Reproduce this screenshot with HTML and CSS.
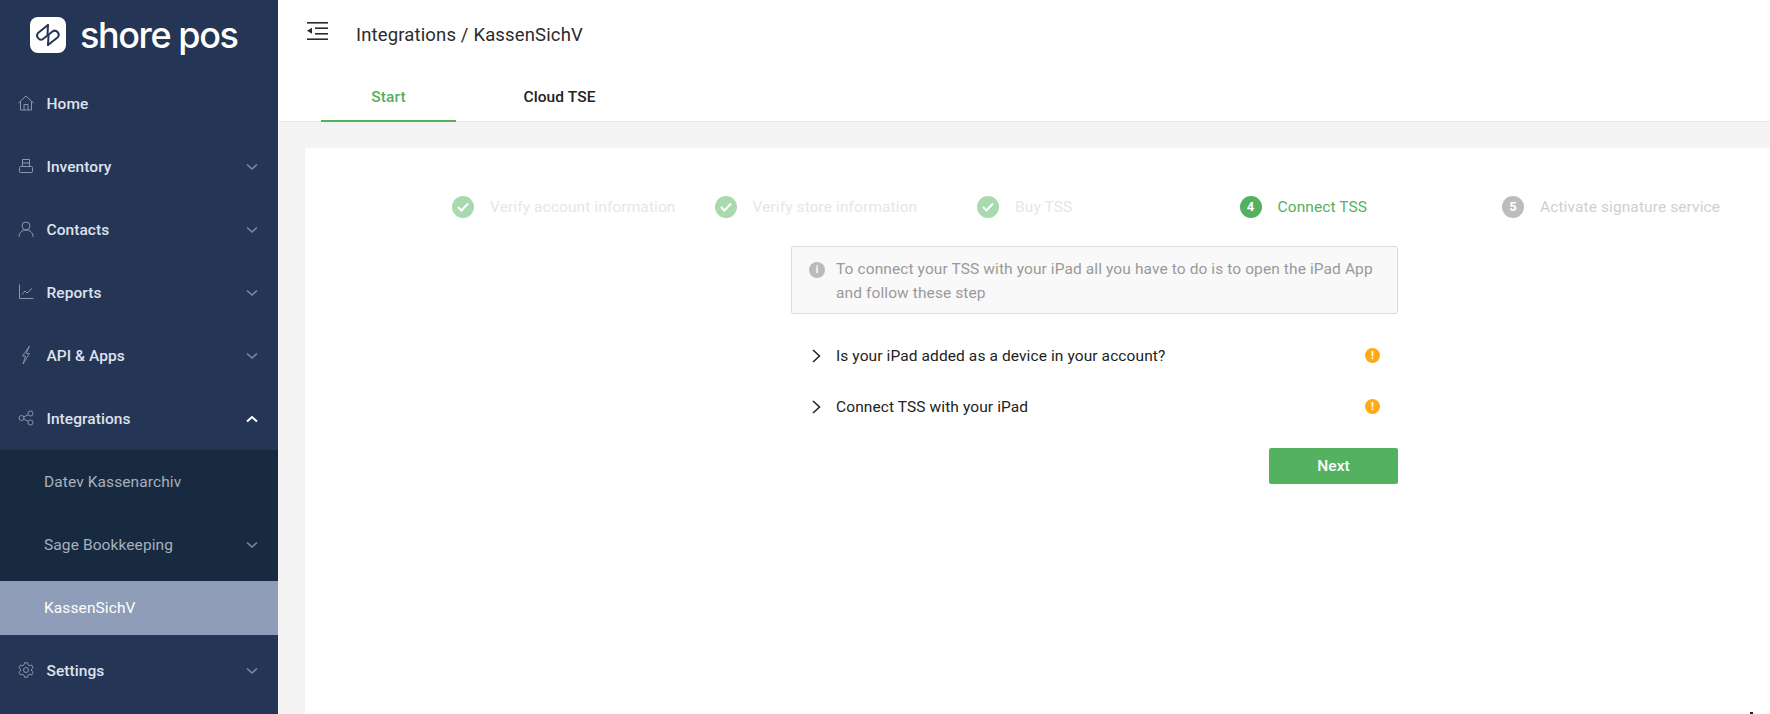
FILE: index.html
```html
<!DOCTYPE html>
<html lang="en">
<head>
    <meta charset="UTF-8">
    <title>Integrations / KassenSichV</title>
    <link rel="stylesheet" href="styles.css">
</head>
<body>
    <div class="app">
        <aside class="sidebar">
            <div class="logo">
                <span class="logo-mark">
                    <svg width="36" height="36" viewBox="0 0 36 36" fill="none" stroke="#253556" stroke-width="2" stroke-linejoin="round" stroke-linecap="round">
                        <path d="M18 8 8 16Q6 18.500 8 21 10.500 24 13 22L22.500 14.500Q25 12.500 27.500 15 30 18 27.500 20.500L18 28"/>
                        <path d="M18 8 17.500 17.500M18 28 18.500 18.500"/>
                    </svg>
                </span>
                <span class="logo-text">shore pos</span>
            </div>
            <nav>
                <a class="nav-item">
                    <svg class="nav-icon" viewBox="0 0 16 16" fill="none" stroke="currentColor"><path d="M.5 8 8 1 15.500 8M2.500 6.500v8.500h11V6.500M6 15V9.500h4V15"/></svg>
                    <span>Home</span>
                </a>
                <a class="nav-item">
                    <svg class="nav-icon" viewBox="0 0 16 16" fill="none" stroke="currentColor"><path d="M4.500 8V1.500h7V8M4 5h8"/><rect x="1.500" y="8.500" width="13" height="6" rx="1"/></svg>
                    <span>Inventory</span>
                    <svg class="nav-arrow" viewBox="0 0 12 8" fill="none" stroke="currentColor" stroke-width="1.600"><path d="M1 1.500 6 6l5-4.500"/></svg>
                </a>
                <a class="nav-item">
                    <svg class="nav-icon" viewBox="0 0 16 16" fill="none" stroke="currentColor"><circle cx="8" cy="5" r="4"/><path d="M1 16c0-4.500 3-7 7-7s7 2.500 7 7"/></svg>
                    <span>Contacts</span>
                    <svg class="nav-arrow" viewBox="0 0 12 8" fill="none" stroke="currentColor" stroke-width="1.600"><path d="M1 1.500 6 6l5-4.500"/></svg>
                </a>
                <a class="nav-item">
                    <svg class="nav-icon" viewBox="0 0 16 16" fill="none" stroke="currentColor"><path d="M1.500 .5v14h14M4 10.500 7 7l2 2 5-4.500"/></svg>
                    <span>Reports</span>
                    <svg class="nav-arrow" viewBox="0 0 12 8" fill="none" stroke="currentColor" stroke-width="1.600"><path d="M1 1.500 6 6l5-4.500"/></svg>
                </a>
                <a class="nav-item">
                    <svg class="nav-icon" viewBox="0 0 16 16" fill="none" stroke="currentColor" stroke-width=".9"><path d="M11.500-1 4.500 9h3L5 17 11.500 6.500H8.200z"/></svg>
                    <span>API &amp; Apps</span>
                    <svg class="nav-arrow" viewBox="0 0 12 8" fill="none" stroke="currentColor" stroke-width="1.600"><path d="M1 1.500 6 6l5-4.500"/></svg>
                </a>
                <a class="nav-item">
                    <svg class="nav-icon" viewBox="0 0 16 16" fill="none" stroke="currentColor"><circle cx="3.500" cy="8" r="2.500"/><circle cx="12.500" cy="3.500" r="2.500"/><circle cx="12.500" cy="12.500" r="2.500"/><path d="M5.800 7 10.200 4.600M5.800 9l4.400 2.400"/></svg>
                    <span>Integrations</span>
                    <svg class="nav-arrow open" viewBox="0 0 12 8" fill="none" stroke="currentColor" stroke-width="2"><path d="M1 6.500 6 2l5 4.500"/></svg>
                </a>
                <div class="submenu">
                    <a class="sub-item"><span>Datev Kassenarchiv</span></a>
                    <a class="sub-item">
                        <span>Sage Bookkeeping</span>
                        <svg class="nav-arrow" viewBox="0 0 12 8" fill="none" stroke="currentColor" stroke-width="1.600"><path d="M1 1.500 6 6l5-4.500"/></svg>
                    </a>
                    <a class="sub-item active"><span>KassenSichV</span></a>
                </div>
                <a class="nav-item">
                    <svg class="nav-icon" viewBox="0 0 16 16" fill="none" stroke="currentColor"><path d="M6.500.8h3l.5 2 1.600.9 2-.6 1.500 2.600-1.500 1.400v1.800l1.500 1.400-1.500 2.600-2-.6-1.600.9-.5 2h-3l-.5-2-1.600-.9-2 .6L.9 10.300l1.500-1.400V7.100L.9 5.700l1.500-2.600 2 .6 1.600-.9z"/><circle cx="8" cy="8" r="2.500"/></svg>
                    <span>Settings</span>
                    <svg class="nav-arrow" viewBox="0 0 12 8" fill="none" stroke="currentColor" stroke-width="1.600"><path d="M1 1.500 6 6l5-4.500"/></svg>
                </a>
            </nav>
        </aside>

        <main class="main">
            <header class="topbar">
                <div class="title-row">
                    <svg class="menu-toggle" viewBox="0 0 21 18" fill="#2b2b2b">
                        <rect y="0" width="21" height="1.600"/>
                        <rect x="8" y="5.400" width="13" height="1.600"/>
                        <rect x="8" y="11" width="13" height="1.600"/>
                        <rect y="16.400" width="21" height="1.600"/>
                        <path d="M0 8.800 5 5.800v6z"/>
                    </svg>
                    <div class="page-title">Integrations / KassenSichV</div>
                </div>
                <div class="tabs">
                    <div class="tab active">Start</div>
                    <div class="tab">Cloud TSE</div>
                </div>
            </header>

            <div class="content">
                <div class="card">
                    <div class="steps">
                        <div class="step done">
                            <span class="step-dot"><svg width="12" height="10" viewBox="0 0 12 10" fill="none" stroke="#fff" stroke-width="2"><path d="M1 5l3.500 3.500L11 1.500"/></svg></span>
                            <span>Verify account information</span>
                        </div>
                        <div class="step done">
                            <span class="step-dot"><svg width="12" height="10" viewBox="0 0 12 10" fill="none" stroke="#fff" stroke-width="2"><path d="M1 5l3.500 3.500L11 1.500"/></svg></span>
                            <span>Verify store information</span>
                        </div>
                        <div class="step done">
                            <span class="step-dot"><svg width="12" height="10" viewBox="0 0 12 10" fill="none" stroke="#fff" stroke-width="2"><path d="M1 5l3.500 3.500L11 1.500"/></svg></span>
                            <span>Buy TSS</span>
                        </div>
                        <div class="step current">
                            <span class="step-dot">4</span>
                            <span>Connect TSS</span>
                        </div>
                        <div class="step todo">
                            <span class="step-dot">5</span>
                            <span>Activate signature service</span>
                        </div>
                    </div>

                    <div class="panel">
                        <div class="info-box">
                            <span class="info-icon">i</span>
                            <p>To connect your TSS with your iPad all you have to do is to open the iPad App and follow these step</p>
                        </div>
                        <div class="check-row">
                            <svg class="row-arrow" viewBox="0 0 9 14" fill="none" stroke="#222" stroke-width="1.500"><path d="M1 1l6.500 6L1 13"/></svg>
                            <span class="row-label">Is your iPad added as a device in your account?</span>
                            <span class="warn-icon">!</span>
                        </div>
                        <div class="check-row">
                            <svg class="row-arrow" viewBox="0 0 9 14" fill="none" stroke="#222" stroke-width="1.500"><path d="M1 1l6.500 6L1 13"/></svg>
                            <span class="row-label">Connect TSS with your iPad</span>
                            <span class="warn-icon">!</span>
                        </div>
                        <div class="actions">
                            <button class="btn-next">Next</button>
                        </div>
                    </div>
                </div>
            </div>
        </main>
        <div class="corner-mark"></div>
    </div>
</body>
</html>
```
FILE: styles.css
```css
* {
    box-sizing: border-box;
}

html, body {
    height: 100%;
}

body {
    margin: 0;
    overflow: hidden;
    font-family: Roboto, "Liberation Sans", sans-serif;
    font-size: 15.500px;
    letter-spacing: 0.100px;
    color: #222;
    background-color: #f4f4f4;
}

.app {
    display: flex;
    height: 714px;
    position: relative;
}

.sidebar {
    width: 278px;
    flex-shrink: 0;
    background-color: #253556;
}

.logo {
    height: 72px;
    padding: 17px 0 0 30px;
    display: flex;
    align-items: flex-start;
}

.logo-mark {
    width: 36px;
    height: 36px;
    border-radius: 8px;
    background-color: #fff;
    display: block;
}

.logo-mark svg {
    display: block;
}

.logo-text {
    margin-left: 14px;
    font-family: Inter, "Open Sans", sans-serif;
    font-size: 36px;
    line-height: 36px;
    font-weight: 500;
    letter-spacing: -1.400px;
    color: #fff;
}

.nav-item {
    height: 63px;
    display: flex;
    align-items: center;
    padding: 0 19px 0 18px;
    font-weight: 500;
    letter-spacing: 0.050px;
    color: #dde2ec;
}

.nav-icon {
    width: 16px;
    height: 16px;
    margin: -2px 12.500px 0 0;
    color: #8d97a9;
    flex-shrink: 0;
    overflow: visible;
}

.nav-arrow {
    width: 12px;
    height: 8px;
    margin-left: auto;
    margin-right: 1px;
    color: #7d889d;
}

.nav-arrow.open {
    color: #fff;
}

.submenu {
    background-color: #172a40;
}

.sub-item {
    height: 63px;
    display: flex;
    align-items: center;
    padding: 0 19px 0 44px;
    color: #a7b0bd;
}

.sub-item.active {
    height: 54px;
    margin: 5px 0 4px;
    background-color: #8f9db8;
    color: #fff;
}

.main {
    flex: 1;
    min-width: 0;
    display: flex;
    flex-direction: column;
}

.topbar {
    height: 122px;
    background-color: #fff;
    border-bottom: 1px solid #e8e8e8;
}

.title-row {
    height: 72px;
    display: flex;
    align-items: flex-start;
    padding: 22px 0 0 29px;
}

.menu-toggle {
    width: 21px;
    height: 18px;
}

.page-title {
    margin: 1px 0 0 28px;
    font-size: 18.500px;
    line-height: 24px;
    color: #2b2b2b;
    letter-spacing: 0.150px;
}

.tabs {
    display: flex;
    padding-left: 43px;
}

.tab {
    width: 135px;
    height: 50px;
    line-height: 50px;
    text-align: center;
    font-weight: 500;
    color: #222;
    margin-right: 36px;
}

.tab.active {
    color: #54b160;
    border-bottom: 2px solid #54b160;
}

.content {
    flex: 1;
    padding: 26px 0 0 27px;
}

.card {
    height: 100%;
    background-color: #fff;
    padding: 47px 0 0 147px;
}

.steps {
    display: grid;
    grid-template-columns: repeat(5, 262.500px);
}

.step {
    display: flex;
    align-items: center;
    height: 23px;
}

.step-dot {
    width: 22px;
    height: 22px;
    border-radius: 50%;
    margin-right: 16px;
    display: flex;
    align-items: center;
    justify-content: center;
    color: #fff;
    font-size: 13px;
    font-weight: 700;
    flex-shrink: 0;
}

.step.done .step-dot {
    background-color: #a9d9ae;
}

.step.done {
    color: #e6e6e8;
}

.step.current {
    color: #54b160;
}

.step.current .step-dot {
    background-color: #54b160;
}

.step.todo {
    color: #cfcfd2;
}

.step.todo .step-dot {
    background-color: #bcbcbc;
}

.panel {
    width: 607px;
    margin: 28px 0 0 339px;
}

.info-box {
    height: 68px;
    margin-bottom: 16px;
    padding: 10px 16px 0 17px;
    display: flex;
    background-color: #f9f9f9;
    border: 1px solid #dcdcdc;
    border-radius: 2px;
    color: #999;
}

.info-box p {
    margin: 0;
    line-height: 24px;
}

.info-icon {
    width: 16px;
    height: 16px;
    margin: 5px 11px 0 0;
    border-radius: 50%;
    background-color: #bbb;
    color: #f9f9f9;
    font-size: 11px;
    font-weight: 700;
    line-height: 16px;
    text-align: center;
    flex-shrink: 0;
}

.check-row {
    height: 51px;
    display: flex;
    align-items: center;
    padding-left: 21px;
}

.row-arrow {
    width: 9px;
    height: 14px;
    margin-right: 15px;
}

.warn-icon {
    width: 15px;
    height: 15px;
    margin: 0 18px 0 auto;
    border-radius: 50%;
    background-color: #fdaa14;
    color: #fff;
    font-size: 11px;
    font-weight: 700;
    line-height: 15px;
    text-align: center;
}

.actions {
    margin-top: 16px;
    display: flex;
    justify-content: flex-end;
}

.btn-next {
    width: 129px;
    height: 36px;
    border: none;
    border-radius: 2px;
    background-color: #54b160;
    color: #fff;
    font-family: inherit;
    font-size: 15.500px;
    font-weight: 500;
}

.corner-mark {
    position: absolute;
    right: 17px;
    bottom: 0;
    width: 3px;
    height: 2px;
    background-color: #222;
}
```
